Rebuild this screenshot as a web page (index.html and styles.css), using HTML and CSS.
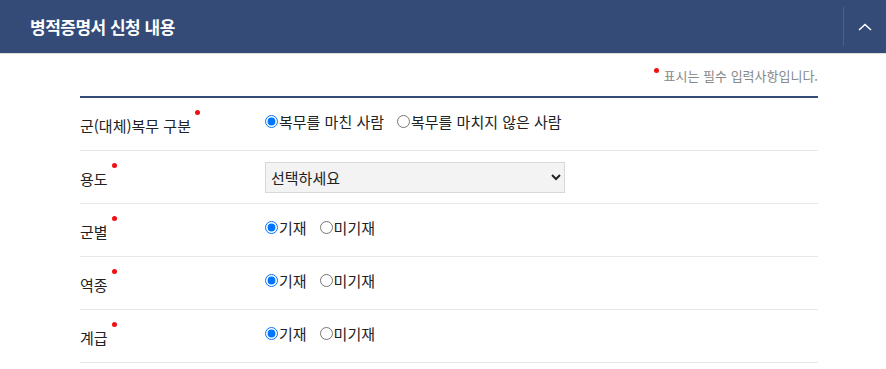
FILE: index.html
```html
<!DOCTYPE html>
<html lang="ko">
<head>
    <meta charset="UTF-8">
    <title>병적증명서 신청 내용</title>
    <link rel="stylesheet" href="styles.css">
</head>
<body>

    <div class="panel-head">
        <h2>병적증명서 신청 내용</h2>
        <button class="btn-fold" type="button" aria-label="접기">
            <svg width="16" height="10" viewBox="0 0 16 10">
                <polyline points="2,8 8,2.5 14,8" fill="none" stroke="#fff" stroke-width="1.6"/>
            </svg>
        </button>
    </div>

    <div class="panel-body">
        <p class="req-note"><span class="req"></span>표시는 필수 입력사항입니다.</p>

        <div class="form-table">
            <div class="row">
                <div class="th">군(대체)복무 구분<span class="req"></span></div>
                <div class="td">
                    <label class="radio"><input type="radio" name="svc" checked>복무를 마친 사람</label>
                    <label class="radio"><input type="radio" name="svc">복무를 마치지 않은 사람</label>
                </div>
            </div>
            <div class="row">
                <div class="th">용도<span class="req"></span></div>
                <div class="td td-select">
                    <select class="sel">
                        <option>선택하세요</option>
                    </select>
                </div>
            </div>
            <div class="row">
                <div class="th">군별<span class="req"></span></div>
                <div class="td">
                    <label class="radio"><input type="radio" name="gun" checked>기재</label>
                    <label class="radio"><input type="radio" name="gun">미기재</label>
                </div>
            </div>
            <div class="row">
                <div class="th">역종<span class="req"></span></div>
                <div class="td">
                    <label class="radio"><input type="radio" name="yeok" checked>기재</label>
                    <label class="radio"><input type="radio" name="yeok">미기재</label>
                </div>
            </div>
            <div class="row">
                <div class="th">계급<span class="req"></span></div>
                <div class="td">
                    <label class="radio"><input type="radio" name="rank" checked>기재</label>
                    <label class="radio"><input type="radio" name="rank">미기재</label>
                </div>
            </div>
        </div>
    </div>

</body>
</html>
```

FILE: styles.css
```css
body {
    margin: 0;
    font-family: "Noto Sans CJK KR", "Noto Sans", sans-serif;
    color: #222;
    background: #fff;
}
.panel-head {
    display: flex;
    align-items: center;
    justify-content: space-between;
    height: 53px;
    background-color: #344b78;
    border-bottom: 1px solid #dcdcdc;
}
.panel-head h2 {
    margin: 0 0 0 30px;
    font-size: 17px;
    font-weight: 700;
    letter-spacing: -0.5px;
    color: #fff;
}
.btn-fold {
    display: flex;
    align-items: center;
    justify-content: center;
    width: 43px;
    height: 39px;
    padding: 0;
    background: none;
    border: none;
    border-left: 1px solid #4b6090;
    cursor: pointer;
}
.panel-body {
    margin: 0 68px 0 80px;
}
.req-note {
    margin: 0;
    padding: 12px 0 11px;
    text-align: right;
    font-size: 13px;
    line-height: 19px;
    color: #888;
}
.req-note .req {
    margin: 0 5px 0 0;
    top: -7px;
}
.req {
    display: inline-block;
    position: relative;
    top: -15px;
    width: 5px;
    height: 5px;
    border-radius: 50%;
    background: #f01010;
    margin-left: 4px;
    vertical-align: middle;
}
.form-table {
    border-top: 2px solid #344b78;
}
.row {
    display: flex;
    align-items: center;
    height: 52px;
    border-bottom: 1px solid #e8e8e8;
}
.th {
    width: 184px;
    font-size: 15px;
    padding-top: 3px;
}
.td {
    display: flex;
    align-items: center;
    gap: 12px;
    font-size: 15px;
    padding-bottom: 5px;
}
.td-select {
    padding-bottom: 0;
}
.radio {
    display: flex;
    align-items: center;
    cursor: pointer;
}
.radio input {
    width: 13px;
    height: 13px;
    margin: 0 1px 0 1px;
}
.sel {
    width: 300px;
    height: 31px;
    margin-left: 1px;
    padding: 0 1px;
    font-family: inherit;
    font-size: 15px;
    color: #222;
    background-color: #f3f3f3;
    border: 1px solid #d8d8d8;
}
```
